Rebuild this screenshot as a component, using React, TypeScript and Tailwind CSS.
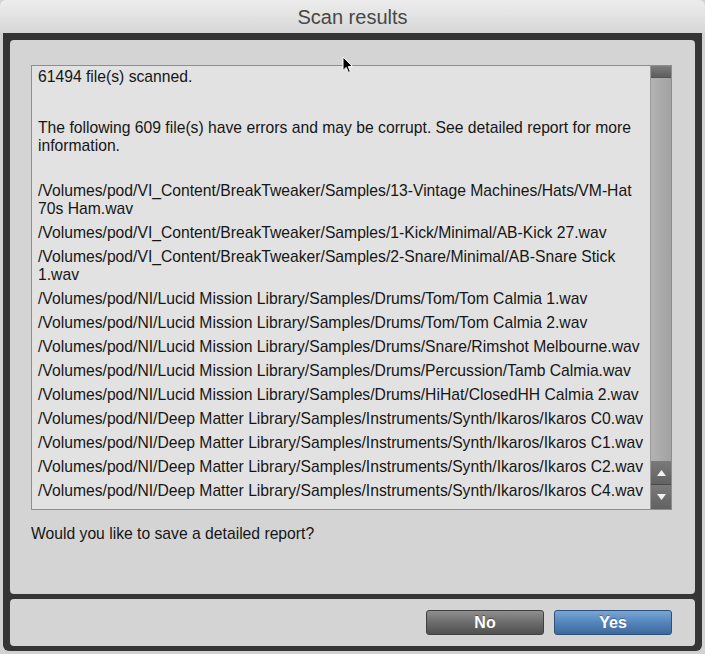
const paths: string[][] = [
    ["/Volumes/pod/VI_Content/BreakTweaker/Samples/13-Vintage Machines/Hats/VM-Hat", "70s Ham.wav"],
    ["/Volumes/pod/VI_Content/BreakTweaker/Samples/1-Kick/Minimal/AB-Kick 27.wav"],
    ["/Volumes/pod/VI_Content/BreakTweaker/Samples/2-Snare/Minimal/AB-Snare Stick", "1.wav"],
    ["/Volumes/pod/NI/Lucid Mission Library/Samples/Drums/Tom/Tom Calmia 1.wav"],
    ["/Volumes/pod/NI/Lucid Mission Library/Samples/Drums/Tom/Tom Calmia 2.wav"],
    ["/Volumes/pod/NI/Lucid Mission Library/Samples/Drums/Snare/Rimshot Melbourne.wav"],
    ["/Volumes/pod/NI/Lucid Mission Library/Samples/Drums/Percussion/Tamb Calmia.wav"],
    ["/Volumes/pod/NI/Lucid Mission Library/Samples/Drums/HiHat/ClosedHH Calmia 2.wav"],
    ["/Volumes/pod/NI/Deep Matter Library/Samples/Instruments/Synth/Ikaros/Ikaros C0.wav"],
    ["/Volumes/pod/NI/Deep Matter Library/Samples/Instruments/Synth/Ikaros/Ikaros C1.wav"],
    ["/Volumes/pod/NI/Deep Matter Library/Samples/Instruments/Synth/Ikaros/Ikaros C2.wav"],
    ["/Volumes/pod/NI/Deep Matter Library/Samples/Instruments/Synth/Ikaros/Ikaros C4.wav"],
];

const App = () => {
    return (
        <div className="relative w-[705px] h-[654px] bg-[#d2d2d2] font-['Liberation_Sans',Arial,sans-serif] overflow-hidden">
            <div className="h-[33px] rounded-t-[6px] bg-gradient-to-b from-[#ededed] to-[#d7d7d7] flex items-center justify-center text-[20px] text-[#474747] pt-[1px]">
                Scan results
            </div>

            <div className="mx-[3px] bg-[#353535] px-[7px] pt-[7px] pb-[5px] rounded-b-[6px]">
                <div className="h-[554px] rounded-[4px] bg-[#d4d4d4] pt-[25px] pl-[21px] pr-[23px]">
                    <div className="h-[445px] border border-[#8e8e8e] bg-[#e2e2e2] flex">
                        <div className="flex-1 pl-[6px] pt-[2px] text-[15.7px] leading-[18px] text-[#161616] whitespace-nowrap overflow-hidden">
                            <div>61494 file(s) scanned.</div>
                            <div className="mt-[33px]">The following 609 file(s) have errors and may be corrupt. See detailed report for more</div>
                            <div>information.</div>
                            <div className="mt-[24px]">
                                {paths.map((p, i) => (
                                    <div key={i} className="py-[3px]">
                                        {p.map((l, j) => <div key={j}>{l}</div>)}
                                    </div>
                                ))}
                            </div>
                        </div>
                        <div className="w-[21px] bg-gradient-to-r from-[#b3b3b3] to-[#a2a2a2] flex flex-col border-l border-[#9a9a9a]">
                            <div className="h-[12px] bg-gradient-to-b from-[#7d7d7d] to-[#5e5e5e] border-b border-[#555]"></div>
                            <div className="flex-1"></div>
                            <div className="h-[24px] bg-gradient-to-b from-[#7a7a7a] to-[#626262] flex items-center justify-center border-b border-[#4a4a4a]">
                                <svg width="9" height="6" viewBox="0 0 9 6"><path d="M4.5 0L9 6H0z" fill="#f2f2f2" /></svg>
                            </div>
                            <div className="h-[24px] bg-gradient-to-b from-[#7a7a7a] to-[#626262] flex items-center justify-center">
                                <svg width="9" height="6" viewBox="0 0 9 6"><path d="M0 0H9L4.5 6z" fill="#f2f2f2" /></svg>
                            </div>
                        </div>
                    </div>
                    <div className="mt-[15px] text-[15.7px] leading-[18px] text-[#161616]">
                        Would you like to save a detailed report?
                    </div>
                </div>

                <div className="mt-[5px] h-[47px] rounded-[4px] bg-[#d4d4d4] flex items-center justify-end gap-[10px] pr-[23px]">
                    <button className="w-[118px] h-[25px] rounded-[3px] border border-[#404040] bg-gradient-to-b from-[#8f8f8f] via-[#6c6c6c] to-[#505050] text-white font-bold text-[16px] [text-shadow:0_-1px_0_rgba(0,0,0,0.4)]">
                        No
                    </button>
                    <button className="w-[118px] h-[25px] rounded-[3px] border border-[#2c5078] bg-gradient-to-b from-[#7aa6d6] via-[#5385bb] to-[#3d6a9c] text-white font-bold text-[16px] [text-shadow:0_-1px_0_rgba(0,0,0,0.3)]">
                        Yes
                    </button>
                </div>
            </div>

            <svg className="absolute left-[342px] top-[56px]" width="12" height="18" viewBox="0 0 12 18">
                <path d="M1 1V14.5L4.2 11.4L6.4 16.4L8.4 15.5L6.3 10.6H10.6Z" fill="#000" stroke="#fff" strokeWidth="1" />
            </svg>
        </div>
    );
};

export default App;
